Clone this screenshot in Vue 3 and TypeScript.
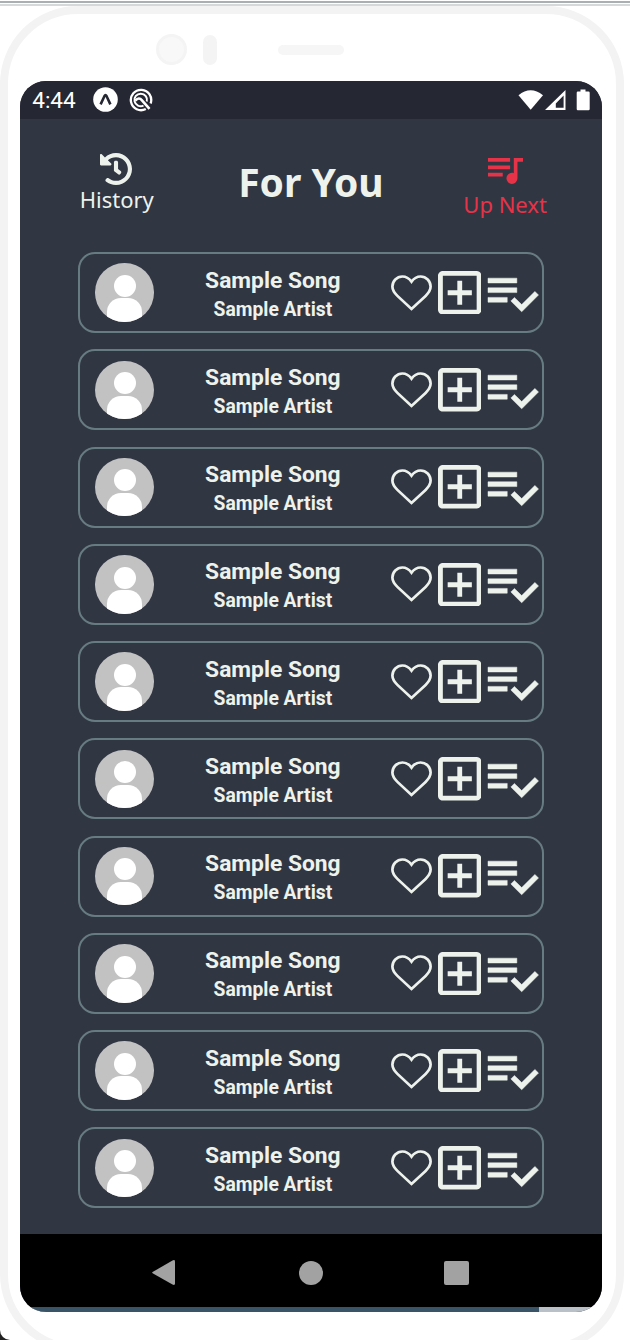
<script setup lang="ts">
interface Song {
  id: number
  title: string
  artist: string
}

const songs: Song[] = Array.from({ length: 10 }, (_, i) => ({
  id: i,
  title: 'Sample Song',
  artist: 'Sample Artist',
}))
</script>

<template>
  <div class="page">
    <div class="surface">
      <div class="rule rule-dark"></div>
      <div class="rule rule-light"></div>
      <div class="phone">
        <div class="sensors">
          <span class="camera"></span>
          <span class="sensor"></span>
          <span class="speaker"></span>
        </div>
        <div class="screen">
          <div class="status">
            <span class="clock">4:44</span>
            <svg class="app-icon" viewBox="0 0 25 25">
              <circle cx="12.5" cy="12.5" r="12.3" fill="#fff" />
              <path d="M7.6 17.4 L11.5 9 Q12.5 7.2 13.5 9 L17.4 17.4" fill="none" stroke="#252733" stroke-width="2.6" />
            </svg>
            <svg class="round-icon" viewBox="0 0 24 24">
              <path d="M16.8 21 A10.2 10.2 0 1 1 21.6 15.5" fill="none" stroke="#fff" stroke-width="2.3" />
              <path d="M14.5 17.6 A6.3 6.3 0 1 1 17.8 13.6" fill="none" stroke="#fff" stroke-width="2" />
              <path d="M6.2 12.6 Q10 8.6 13 12.4 L20.5 20.8" fill="none" stroke="#fff" stroke-width="2.6" />
            </svg>
            <svg class="signals" viewBox="0 0 72 24">
              <path d="M0.5 6.2 Q12.5 -3.8 25 6.2 L12.7 20.8 Z" fill="#fff" />
              <path d="M47.5 1 V21 H27 Z M45.6 6.6 L37.8 14.6 V18.8 H45.6 Z" fill="#fff" fill-rule="evenodd" />
              <path d="M62.5 0.5 h5 v2 h3 q1.2 0 1.2 1.2 v16.4 q0 1.2 -1.2 1.2 h-10.6 q-1.2 0 -1.2 -1.2 v-16.4 q0 -1.2 1.2 -1.2 h2.6z" fill="#fff" />
            </svg>
          </div>

          <header class="header">
            <div class="tab history">
              <svg class="history-icon" viewBox="8 8 496 496">
                <path fill="currentColor" d="M504 255.531c.253 136.64-111.18 248.372-247.82 248.468-59.015.042-113.223-20.53-155.822-54.911-11.077-8.94-11.905-25.541-1.839-35.607l11.267-11.267c8.609-8.609 22.353-9.551 31.891-1.984C173.062 425.135 212.781 440 256 440c101.705 0 184-82.311 184-184 0-101.705-82.311-184-184-184-48.814 0-93.149 18.969-126.068 49.932l50.754 50.754c10.08 10.08 2.941 27.314-11.313 27.314H24c-8.837 0-16-7.163-16-16V38.627c0-14.254 17.234-21.393 27.314-11.314l49.372 49.372C129.209 34.136 189.552 8 256 8c136.81 0 247.747 110.78 248 247.531zm-180.912 78.784l9.823-12.63c8.138-10.463 6.253-25.542-4.21-33.679L288 256.349V152c0-13.255-10.745-24-24-24h-16c-13.255 0-24 10.745-24 24v135.651l65.409 50.874c10.463 8.137 25.541 6.253 33.679-4.21z" />
              </svg>
              <span>History</span>
            </div>
            <h1 class="title">For You</h1>
            <div class="tab next">
              <svg class="next-icon" viewBox="3 6 19 14">
                <path fill="currentColor" d="M15,6H3V8H15V6M15,10H3V12H15V10M3,16H11V14H3V16M17,6V14.18C16.69,14.07 16.35,14 16,14A3,3 0 0,0 13,17A3,3 0 0,0 16,20A3,3 0 0,0 19,17V8H22V6H17Z" />
              </svg>
              <span>Up Next</span>
            </div>
          </header>

          <main class="list">
            <article v-for="song in songs" :key="song.id" class="card">
              <div class="avatar">
                <span class="head"></span>
                <span class="torso"></span>
              </div>
              <div class="info">
                <span class="song">{{ song.title }}</span>
                <span class="artist">{{ song.artist }}</span>
              </div>
              <div class="actions">
                <svg class="heart" viewBox="0 0 41 36">
                  <path d="M20.5 6.6 C18 3.2 14.8 1.5 11.4 1.5 C5.8 1.5 1.4 6 1.4 11.6 C1.4 15.6 3.4 18 6.4 20.9 L20.5 34 L34.6 20.9 C37.6 18 39.6 15.6 39.6 11.6 C39.6 6 35.2 1.5 29.6 1.5 C26.2 1.5 23 3.2 20.5 6.6 Z" fill="none" stroke="currentColor" stroke-width="2.7" />
                </svg>
                <svg class="add" viewBox="3 3 18 18">
                  <path fill="currentColor" d="M19 3H5c-1.11 0-2 .9-2 2v14c0 1.1.89 2 2 2h14c1.1 0 2-.9 2-2V5c0-1.1-.9-2-2-2zm0 16H5V5h14v14zm-8-2h2v-4h4v-2h-4V7h-2v4H7v2h4z" />
                </svg>
                <svg class="queue" viewBox="2 6 21 14">
                  <path fill="currentColor" stroke="currentColor" stroke-width="0.2" d="M14 10H2v2h12v-2zm0-4H2v2h12V6zM2 16h8v-2H2v2zm19.5-4.5L23 13l-6.99 7-4.51-4.5L13 14l3.01 3 5.49-5.5z" />
                </svg>
              </div>
            </article>
          </main>

          <nav class="nav">
            <svg viewBox="0 0 26 28" class="back">
              <path d="M1.6 12.9 L21.5 1.4 Q24 0.3 24 2.5 V24.5 Q24 26.7 21.5 25.6 L1.6 14.3 Q0.6 13.6 1.6 12.9Z" fill="#a2a2a2" />
            </svg>
            <span class="home"></span>
            <span class="recent"></span>
          </nav>
          <div class="progress"><div class="played"></div></div>
        </div>
      </div>
    </div>
  </div>
</template>

<style>
body {
  margin: 0;
  background: #222;
}
</style>

<style scoped>
.page {
  width: 630px;
  height: 1340px;
  overflow: hidden;
  background: #222;
}
.surface {
  height: 1340px;
  background: #fff;
  border-bottom-left-radius: 10px;
  overflow: hidden;
  box-sizing: border-box;
  padding-top: 1px;
}
.rule {
  height: 2px;
}
.rule-dark {
  background: #aaafb1;
}
.rule-light {
  margin-top: 1px;
  background: #d5d9da;
}
.phone {
  box-sizing: border-box;
  width: 624px;
  height: 1346px;
  border: 8px solid #f3f3f3;
  border-radius: 78px;
  padding-left: 11.7px;
}
.sensors {
  height: 66.5px;
  display: flex;
  align-items: center;
  padding-left: 136px;
  box-sizing: border-box;
  padding-top: 5px;
}
.camera {
  box-sizing: border-box;
  width: 31px;
  height: 31px;
  border-radius: 50%;
  background: #f8f8f8;
  border: 3px solid #f4f4f4;
}
.sensor {
  width: 14px;
  height: 30px;
  border-radius: 7px;
  background: #f4f4f4;
  margin-left: 16px;
}
.speaker {
  width: 66px;
  height: 10px;
  border-radius: 5px;
  background: #f6f6f6;
  margin-left: 61px;
}
.screen {
  width: 582.5px;
  height: 1231px;
  border-radius: 26px;
  overflow: hidden;
  background: #313643;
  display: flex;
  flex-direction: column;
}
.status {
  height: 38.5px;
  flex: none;
  background: #252733;
  display: flex;
  align-items: center;
  color: #fff;
}
.clock {
  font: 400 22.6px/26px Roboto, sans-serif;
  margin-left: 12.5px;
  width: 61px;
  padding-top: 2px;
}
.app-icon {
  width: 25px;
  height: 25px;
}
.round-icon {
  width: 24px;
  height: 24px;
  margin-left: 11px;
}
.signals {
  width: 72px;
  height: 24px;
  margin-left: auto;
  margin-right: 12px;
  margin-top: 2px;
}
.header {
  height: 133px;
  flex: none;
  display: grid;
  grid-template-columns: repeat(3, 1fr);
  color: #edf3ec;
  font-family: "Noto Sans", sans-serif;
}
.tab {
  display: flex;
  flex-direction: column;
  align-items: center;
  font-size: 22px;
  line-height: 28px;
}
.history {
  padding-top: 34px;
}
.history-icon {
  width: 32px;
  height: 32px;
  margin-right: 1px;
}
.next {
  padding-top: 38.5px;
  color: #e63348;
}
.next-icon {
  width: 35px;
  height: 26px;
  margin-bottom: 6px;
  margin-left: 1px;
}
.title {
  margin: 0;
  padding-top: 36px;
  font-size: 39px;
  line-height: 54px;
  font-weight: 700;
  text-align: center;
}
.list {
  flex: 1;
  display: flex;
  flex-direction: column;
  gap: 16.25px;
  padding: 0 58px;
}
.card {
  box-sizing: border-box;
  height: 81px;
  flex: none;
  border: 2px solid #677b82;
  border-radius: 17px;
  display: flex;
  align-items: center;
  color: #edf3ec;
}
.avatar {
  width: 58.5px;
  height: 58.5px;
  margin-left: 15.7px;
  border-radius: 50%;
  background: #c2c2c2;
  overflow: hidden;
  flex: none;
  display: flex;
  flex-direction: column;
  align-items: center;
}
.head {
  width: 22px;
  height: 22px;
  border-radius: 50%;
  background: #fff;
  margin-top: 11.5px;
  flex: none;
}
.torso {
  width: 35px;
  height: 34px;
  border-radius: 14px 14px 0 0;
  background: #fff;
  margin-top: 1.5px;
  flex: none;
}
.info {
  width: 237px;
  box-sizing: border-box;
  padding: 3px 0 0 1px;
  display: flex;
  flex-direction: column;
  align-items: center;
  font-family: Roboto, sans-serif;
  font-weight: 700;
}
.song {
  font-size: 22.8px;
  line-height: 30px;
}
.artist {
  font-size: 19.3px;
  line-height: 27px;
}
.actions {
  display: flex;
  align-items: center;
  flex: none;
}
.heart {
  width: 41px;
  height: 36px;
}
.add {
  width: 43.5px;
  height: 43.5px;
  margin-left: 6px;
}
.queue {
  width: 50.5px;
  height: 34px;
  margin-left: 6.5px;
  margin-top: 4px;
  overflow: visible;
}
.nav {
  height: 73px;
  flex: none;
  background: #000;
  display: flex;
  align-items: center;
  box-sizing: border-box;
  padding: 5px 0 0 131.5px;
}
.back {
  width: 26px;
  height: 28px;
}
.home {
  width: 24px;
  height: 24px;
  border-radius: 50%;
  background: #a2a2a2;
  margin-left: 121.5px;
}
.recent {
  width: 24.5px;
  height: 24.5px;
  border-radius: 2px;
  background: #a2a2a2;
  margin-left: 121.5px;
}
.progress {
  height: 4.5px;
  flex: none;
  background: #b9c0c7;
}
.played {
  width: 519.5px;
  height: 100%;
  background: #3a5467;
}
</style>
